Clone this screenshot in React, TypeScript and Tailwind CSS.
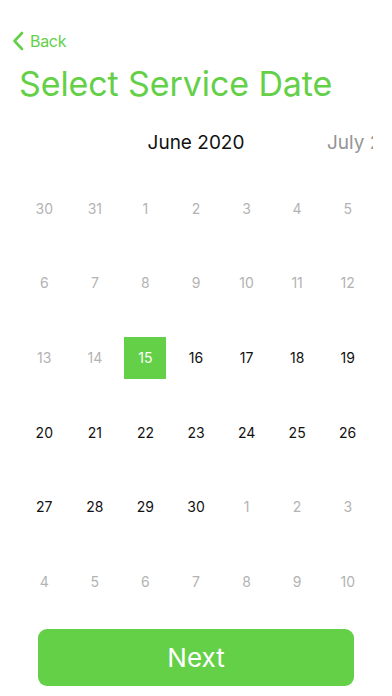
import React, { useState } from "react";

type Day = { n: number; muted: boolean };

const weeks: Day[][] = [
  [30, 31, 1, 2, 3, 4, 5].map((n) => ({ n, muted: true })),
  [6, 7, 8, 9, 10, 11, 12].map((n) => ({ n, muted: true })),
  [13, 14].map((n) => ({ n, muted: true })).concat([15, 16, 17, 18, 19].map((n) => ({ n, muted: false }))),
  [20, 21, 22, 23, 24, 25, 26].map((n) => ({ n, muted: false })),
  [27, 28, 29, 30].map((n) => ({ n, muted: false })).concat([1, 2, 3].map((n) => ({ n, muted: true }))),
  [4, 5, 6, 7, 8, 9, 10].map((n) => ({ n, muted: true })),
];

const App = () => {
  const [selected, setSelected] = useState("2-2");

  return (
    <div
      className="w-[392px] h-[696px] bg-white overflow-hidden flex flex-col"
      style={{ fontFamily: "Inter, 'Liberation Sans', sans-serif" }}
    >
      <div className="h-[80px] flex items-end pb-[29px]">
        <button className="flex items-center gap-[6px] pl-[12px] text-[#64d048]">
          <svg width="12" height="20" viewBox="0 0 12 20" fill="none">
            <path d="M10 2L2.5 10L10 18" stroke="#64d048" strokeWidth="2.6" strokeLinecap="round" strokeLinejoin="round" />
          </svg>
          <span className="text-[16px] leading-none tracking-[-0.3px]">Back</span>
        </button>
      </div>
      <h1 className="-mt-[16px] h-[40px] pl-[19px] text-[34px] leading-[40px] text-[#64d048] tracking-[-0.1px]">
        Select Service Date
      </h1>

      <div className="mt-[28px] mx-[19px] flex overflow-hidden h-[22px] items-center">
        <div className="ml-[89px] w-[176px] shrink-0 text-center text-[19px] text-[#111]">June 2020</div>
        <div className="w-[176px] shrink-0 text-center text-[19px] text-[#959595]">July 2020</div>
      </div>

      <div className="mt-[17px] px-[19px] flex flex-col">
        {weeks.map((week, r) => (
          <div key={r} className="grid grid-cols-7 h-[74.67px]">
            {week.map((d, c) => {
              const id = `${r}-${c}`;
              const isSel = selected === id;
              return (
                <div key={id} className="flex items-center justify-center">
                  <button
                    onClick={() => !d.muted && setSelected(id)}
                    className={`w-[42px] h-[42px] flex items-center justify-center text-[14px] ${
                      isSel ? "bg-[#64d048] text-white" : d.muted ? "text-[#b3b3b3]" : "text-[#111]"
                    }`}
                  >
                    {d.n}
                  </button>
                </div>
              );
            })}
          </div>
        ))}
      </div>

      <div className="mt-[10px] px-[38px]">
        <button className="w-full h-[57px] rounded-[9px] bg-[#64d048] text-white text-[26px]">Next</button>
      </div>
    </div>
  );
};

export default App;
